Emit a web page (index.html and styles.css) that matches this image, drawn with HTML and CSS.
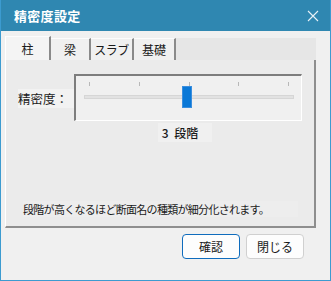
FILE: index.html
```html
<!DOCTYPE html>
<html lang="ja">
<head>
    <meta charset="UTF-8">
    <title>精密度設定</title>
    <link rel="stylesheet" href="styles.css">
</head>
<body>
    <div class="dialog">
        <div class="titlebar">
            <span class="title">精密度設定</span>
            <svg class="close" width="12" height="12" viewBox="0 0 12 12">
                <path d="M1 1L11 11M11 1L1 11" stroke="#e8f1f7" stroke-width="1.1" fill="none"/>
            </svg>
        </div>
        <div class="body">
            <div class="tabs">
                <div class="tab active">柱</div>
                <div class="tab">梁</div>
                <div class="tab">スラブ</div>
                <div class="tab">基礎</div>
                <div class="tabfill"></div>
            </div>
            <div class="panel">
                <div class="row">
                    <span class="label">精密度：</span>
                    <div class="slider">
                        <div class="ticks">
                            <i></i><i></i><i></i><i></i><i></i>
                        </div>
                        <div class="track"></div>
                        <div class="thumb"></div>
                    </div>
                </div>
                <div class="level"><span>3 段階</span></div>
                <div class="note">段階が高くなるほど断面名の種類が細分化されます。</div>
            </div>
            <div class="buttons">
                <button class="btn primary">確認</button>
                <button class="btn">閉じる</button>
            </div>
        </div>
    </div>
</body>
</html>
```

FILE: styles.css
```css
*{
    margin:0;
    padding:0;
    box-sizing:border-box;
}
body{
    font-family:"Noto Sans CJK JP","Noto Sans",sans-serif;
    font-size:12px;
    color:#1a1a1a;
}
.dialog{
    width:331px;
    height:281px;
    background:#f0f0f0;
    border:1px solid #3c9bd0;
    border-top:none;
    display:flex;
    flex-direction:column;
}
.titlebar{
    height:31px;
    background:#2f87b1;
    color:white;
    display:flex;
    align-items:center;
    justify-content:space-between;
    padding:0 11px 0 13px;
}
.title{
    font-size:13px;
    font-weight:bold;
    letter-spacing:0.3px;
}
.body{
    padding:5px 14px 0 4px;
}
.tabs{
    display:flex;
    height:24px;
}
.tab{
    padding:0 8px;
    background:#f0f0f0;
    border-right:2px solid #8a8a8a;
    border-top:1px solid #fcfcfc;
    margin-top:2px;
    line-height:22px;
    font-size:12px;
}
.tab.active{
    width:46px;
    text-align:center;
    margin-top:0;
    line-height:24px;
    background:#f4f4f4;
    border-left:1px solid #ffffff;
}
.tab:nth-child(2){ width:40px; text-align:center; }
.tab:nth-child(3){ width:43px; text-align:center; padding:0; letter-spacing:-0.5px; }
.tab:nth-child(4){ width:42px; text-align:center; padding:0; }
.tabfill{
    flex:1;
    background:#e6e6e6;
    margin-top:2px;
}
.panel{
    height:168px;
    background:#ebebeb;
    border-right:2px solid #8e8e8e;
    border-bottom:2px solid #8e8e8e;
    border-left:1px solid #ffffff;
    padding:14px 0 0 12px;
    display:flex;
    flex-direction:column;
}
.row{
    display:flex;
    align-items:center;
}
.label{
    width:56px;
    font-size:12.5px;
    background:#f2f2f2;
    margin-top:2px;
}
.slider{
    position:relative;
    width:228px;
    height:47px;
    background:#f0f0f0;
    border-top:2px solid #7d7d7d;
    border-left:2px solid #7d7d7d;
    border-right:1px solid #ffffff;
    border-bottom:1px solid #ffffff;
}
.ticks{
    display:flex;
    justify-content:space-between;
    margin:6px 12px 0 13px;
}
.ticks i{
    width:1px;
    height:4px;
    background:#b8b8b8;
}
.track{
    margin:9px 7px 0 8px;
    height:4px;
    background:#e2e2e2;
    border:1px solid #d6d6d6;
}
.thumb{
    position:absolute;
    left:106px;
    top:10px;
    width:10px;
    height:22px;
    background:#0a78d7;
    border:1px solid #3a8ede;
}
.level{
    text-align:center;
    margin-top:2px;
    padding-left:8px;
}
.level span{
    display:inline-block;
    background:#f0f0f0;
    padding:1px 14px 1px 4px;
    font-size:12px;
    font-weight:500;
    margin-left:30px;
    word-spacing:3px;
}
.note{
    margin-top:auto;
    margin-bottom:9px;
    margin-left:5px;
    margin-right:16px;
    background:#ededed;
    font-size:11px;
    letter-spacing:-0.7px;
}
.buttons{
    display:flex;
    justify-content:flex-end;
    gap:6px;
    margin-top:6px;
    padding-right:12px;
}
.btn{
    font-family:inherit;
    font-size:12px;
    width:58px;
    height:25px;
    background:#fdfdfd;
    border:1px solid #d0d0d0;
    border-radius:4px;
    color:#1a1a1a;
}
.btn.primary{
    border:1.5px solid #0f6cbd;
}
```
